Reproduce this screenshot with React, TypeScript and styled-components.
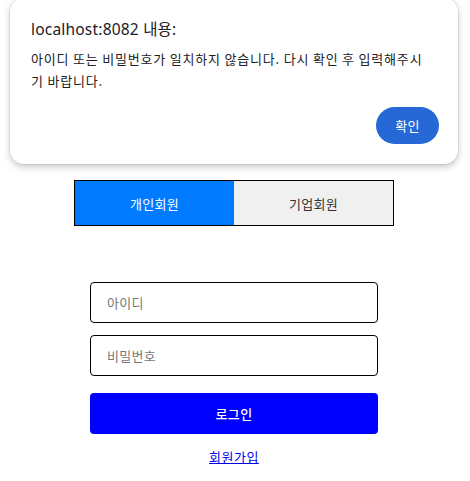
import styled, { createGlobalStyle } from 'styled-components'

const GlobalStyle = createGlobalStyle`
  body {
    margin: 0;
    background: #fff;
    font-family: "Noto Sans CJK KR", "Noto Sans", sans-serif;
  }
`

const Root = styled.div`
  display: flex;
  flex-direction: column;
  align-items: center;
  padding-top: 180px;
  padding-right: 2px;
`

const Tabs = styled.div`
  display: flex;
  width: 320px;
  border: 1px solid #000;
  box-sizing: border-box;
`

const Tab = styled.button<{ $active?: boolean }>`
  flex: 1;
  height: 44px;
  border: none;
  margin: 0;
  padding: 0;
  background: ${(p) => (p.$active ? '#007bff' : '#f0f0f0')};
  color: ${(p) => (p.$active ? '#fff' : '#333')};
  font-family: "Noto Sans CJK KR", sans-serif;
  font-size: 13px;
  letter-spacing: 0.3px;
`

const Form = styled.form`
  display: flex;
  flex-direction: column;
  width: 288px;
  margin-top: 56px;
`

const Input = styled.input`
  box-sizing: border-box;
  height: 41px;
  margin-bottom: 12px;
  padding: 0 16px;
  border: 1px solid #000;
  border-radius: 4px;
  font-family: "Noto Sans CJK KR", sans-serif;
  font-size: 13px;
  letter-spacing: 0.3px;
  outline: none;

  &::placeholder {
    color: #777;
  }
`

const Submit = styled.button`
  height: 41px;
  margin-top: 5px;
  border: none;
  border-radius: 4px;
  background: #0000ff;
  color: #fff;
  font-family: "Noto Sans CJK KR", sans-serif;
  font-size: 13px;
  font-weight: 500;
  letter-spacing: 0.3px;
`

const SignUp = styled.a`
  margin-top: 14px;
  color: #0000ee;
  font-size: 13px;
  letter-spacing: 0.5px;
  text-decoration: underline;
  line-height: 18px;
`

const Dialog = styled.div`
  position: absolute;
  left: 10px;
  top: -2px;
  width: 448px;
  height: 166px;
  box-sizing: border-box;
  padding: 20px 20px 20px 21px;
  background: #fff;
  border-radius: 14px;
  box-shadow: 0 0 0 1px rgba(0, 0, 0, 0.06), 0 3px 7px rgba(0, 0, 0, 0.22);
  display: flex;
  flex-direction: column;
`

const Title = styled.div`
  font-family: "Noto Sans", "Noto Sans CJK KR", sans-serif;
  font-size: 15.5px;
  letter-spacing: 0.2px;
  color: #202124;
  line-height: 22px;
`

const Message = styled.div`
  margin-top: 8px;
  font-size: 13px;
  letter-spacing: 0.8px;
  line-height: 22px;
  color: #202124;
  padding-right: 4px;
`

const Actions = styled.div`
  margin-top: auto;
  display: flex;
  justify-content: flex-end;
`

const OkButton = styled.button`
  width: 63px;
  height: 37px;
  margin-right: -1px;
  border: none;
  border-radius: 19px;
  background: #2668d6;
  color: #fff;
  font-family: "Noto Sans CJK KR", sans-serif;
  font-size: 13px;
  letter-spacing: 0.3px;
`

export default function App() {
  return (
    <>
      <GlobalStyle />
      <Root>
        <Tabs>
          <Tab $active>개인회원</Tab>
          <Tab>기업회원</Tab>
        </Tabs>
        <Form onSubmit={(e) => e.preventDefault()}>
          <Input placeholder="아이디" />
          <Input type="password" placeholder="비밀번호" />
          <Submit type="submit">로그인</Submit>
        </Form>
        <SignUp href="#">회원가입</SignUp>
      </Root>
      <Dialog>
        <Title>localhost:8082 내용:</Title>
        <Message>아이디 또는 비밀번호가 일치하지 않습니다. 다시 확인 후 입력해주시기 바랍니다.</Message>
        <Actions>
          <OkButton>확인</OkButton>
        </Actions>
      </Dialog>
    </>
  )
}
